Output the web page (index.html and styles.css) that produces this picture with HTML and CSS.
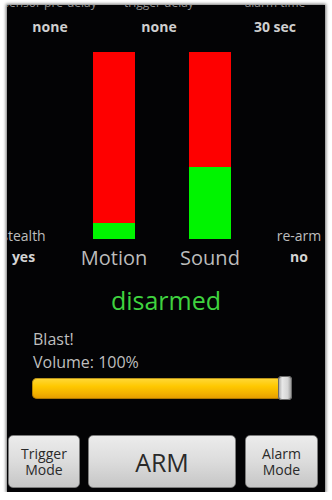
FILE: index.html
```html
<!DOCTYPE html>
<html>
<head>
<meta charset="utf-8">
<link rel="stylesheet" href="styles.css">
</head>
<body>
<div class="frame">
  <div class="row captions"><span>sensor pre-delay</span><span>trigger delay</span><span>alarm time</span></div>
  <div class="row values"><span>none</span><span>none</span><span>30 sec</span></div>
  <div class="stage">
    <div class="side side-left"><span class="side-label">stealth</span><span class="side-value">yes</span></div>
    <div class="meters">
      <div class="meter">
        <div class="bar"><div class="fill" style="height:16px"></div></div>
        <div class="meter-label">Motion</div>
      </div>
      <div class="meter">
        <div class="bar"><div class="fill" style="height:72px"></div></div>
        <div class="meter-label">Sound</div>
      </div>
    </div>
    <div class="side side-right"><span class="side-label">re-arm</span><span class="side-value">no</span></div>
  </div>
  <div class="status">disarmed</div>
  <div class="volume">
    <div>Blast!</div>
    <div>Volume: 100%</div>
  </div>
  <div class="slider"><div class="track"></div><div class="thumb"></div></div>
  <div class="buttons">
    <button class="btn btn-side"><span class="btn-line">Trigger</span><span class="btn-line">Mode</span></button>
    <button class="btn btn-main">ARM</button>
    <button class="btn btn-side btn-right"><span class="btn-line">Alarm</span><span class="btn-line">Mode</span></button>
  </div>
</div>
</body>
</html>
```

FILE: styles.css
```css
html, body {
  margin: 0;
  padding: 0;
  background: #ffffff;
}
body {
  font-family: "Open Sans", "Noto Sans", sans-serif;
}
.frame {
  margin: 5px 7px 0 7px;
  width: 318px;
  height: 487px;
  background: #030305;
  overflow: hidden;
  display: flex;
  flex-direction: column;
  box-shadow: 0 0 3px 1px rgba(0, 0, 0, 0.55);
}
.row {
  display: grid;
  grid-template-columns: 86px 132px 1fr;
  justify-items: center;
  white-space: nowrap;
}
.captions {
  margin-top: -9px;
  font-size: 12px;
  line-height: 14px;
  color: #8f8f8f;
}
.values {
  margin-top: 8px;
  font-size: 14px;
  line-height: 18px;
  font-weight: bold;
  color: #cfcfcf;
}
.stage {
  margin-top: 16px;
  display: flex;
  align-items: flex-end;
}
.side {
  display: flex;
  flex-direction: column;
  align-items: center;
  font-size: 14px;
  line-height: 21px;
  color: #bdbdbd;
  white-space: nowrap;
  margin-bottom: 3px;
}
.side-left {
  width: 33px;
}
.side-right {
  width: 52px;
  margin-left: auto;
}
.side-value {
  font-weight: bold;
  color: #d4d4d4;
}
.meters {
  display: flex;
  margin-left: 26px;
}
.meter {
  width: 96px;
  display: flex;
  flex-direction: column;
  align-items: center;
}
.bar {
  width: 42px;
  height: 187px;
  background: #fe0000;
  display: flex;
  flex-direction: column;
  justify-content: flex-end;
}
.fill {
  background: #00f400;
}
.meter-label {
  margin-top: 7px;
  font-size: 20px;
  line-height: 24px;
  color: #bcbcbc;
}
.status {
  margin-top: 15px;
  text-align: center;
  font-size: 25px;
  line-height: 30px;
  color: #3fd23f;
}
.volume {
  margin-top: 13px;
  padding-left: 26px;
  font-size: 16px;
  line-height: 23px;
  color: #bfbfbf;
}
.slider {
  margin-top: 2px;
  margin-left: 25px;
  height: 24px;
  display: flex;
  align-items: center;
}
.track {
  width: 250px;
  height: 21px;
  border-radius: 5px;
  background: linear-gradient(#ffd93a 0%, #ffc800 40%, #f2b000 75%, #e39a00 100%);
  box-shadow: inset 0 0 0 1px rgba(120, 80, 0, 0.5);
}
.thumb {
  width: 14px;
  height: 24px;
  margin-left: -4px;
  border-radius: 4px;
  background: linear-gradient(90deg, #9a9a9a 0%, #e8e8e8 30%, #d4d4d4 70%, #8a8a8a 100%);
  box-shadow: inset 0 0 0 1px #6a6a6a;
}
.buttons {
  margin-top: auto;
  padding: 0 7px 4px 1px;
  display: flex;
  gap: 8px;
}
.btn {
  height: 53px;
  border: 1px solid #7c7c7c;
  border-radius: 5px;
  background: linear-gradient(#ececec 0%, #dcdcdc 50%, #c6c6c6 100%);
  color: #2a2a2a;
  font-family: "Open Sans", "Noto Sans", sans-serif;
  padding: 0;
  margin: 0;
}
.btn-side {
  width: 72px;
  font-size: 14px;
  display: flex;
  flex-direction: column;
  align-items: center;
  justify-content: center;
}
.btn-line {
  display: block;
  height: 16px;
  line-height: 16px;
}
.btn-right {
  width: 73px;
  margin-left: 1px;
}
.btn-main {
  width: 148px;
  font-size: 25px;
  line-height: 30px;
}
```
